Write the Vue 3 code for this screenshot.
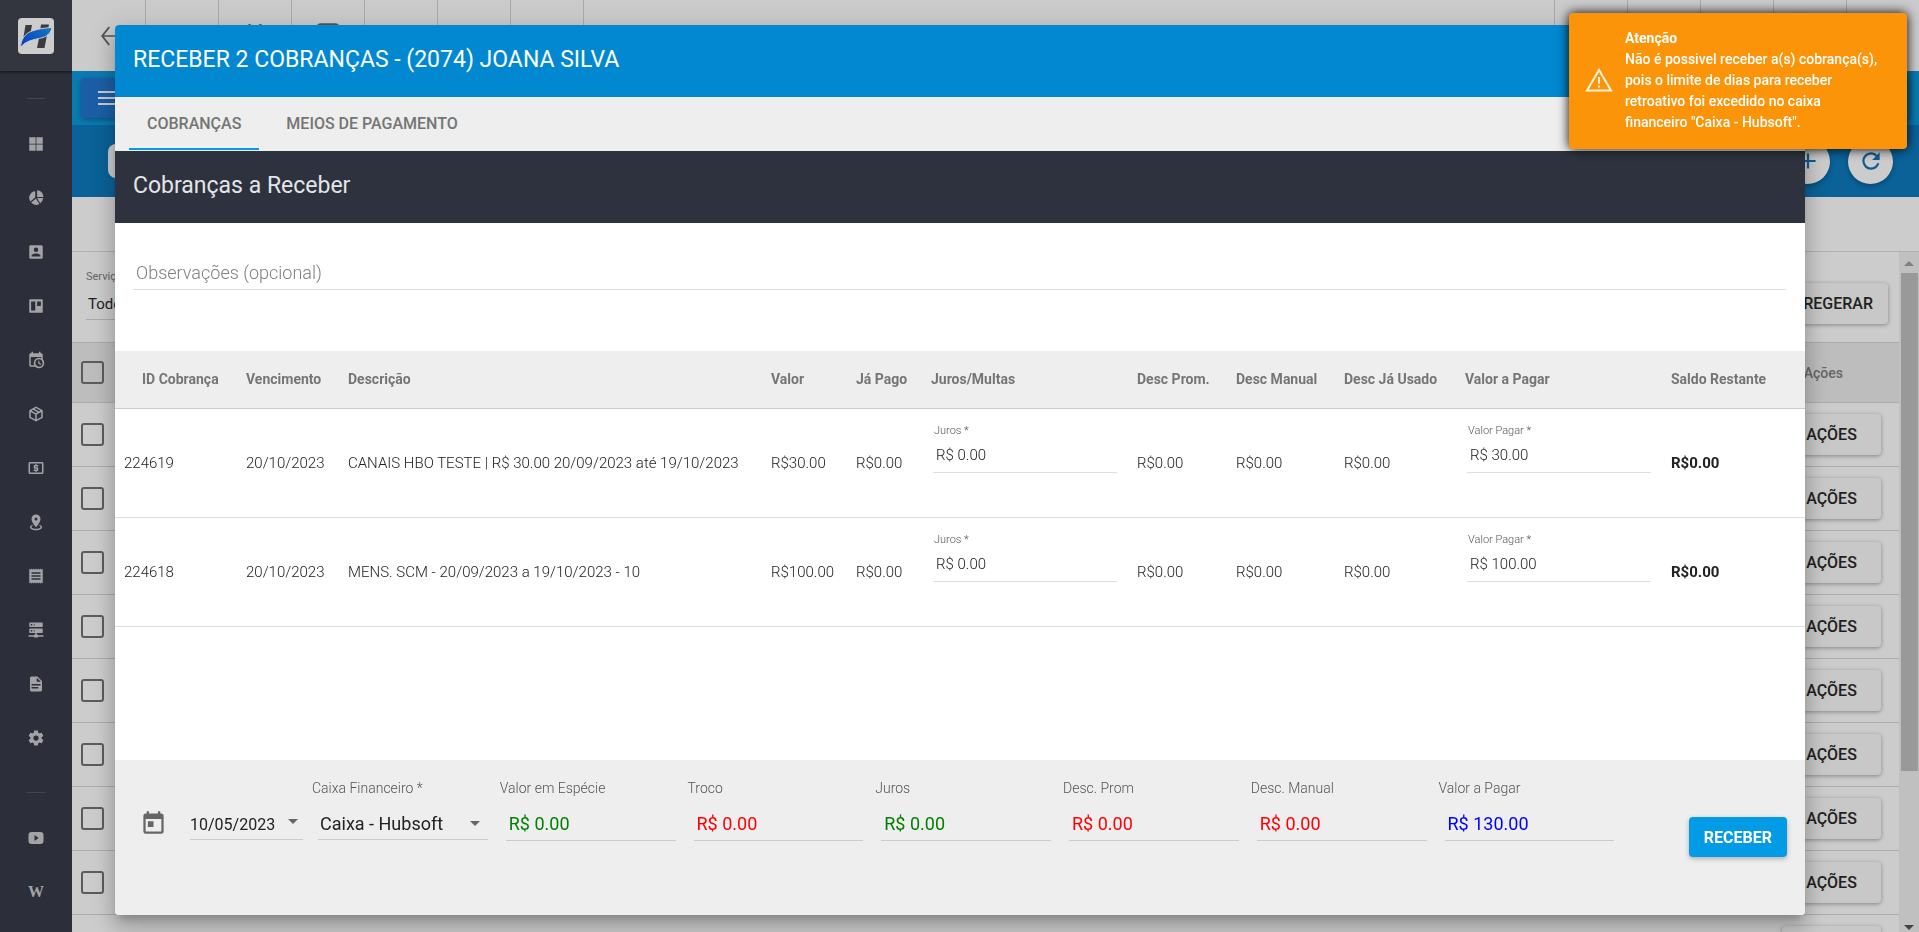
<script setup>
import { ref } from 'vue'

const mainIcons = [
  { name: 'Painel', d: 'M3 3h8.5v8.5H3zM12.5 3H21v8.5h-8.5zM3 12.5h8.5V21H3zM12.5 12.5H21V21h-8.5z' },
  { name: 'Gráficos', d: 'M13.5 1.5A9 9 0 0 1 22 10.5H13.5zM11 3v8L4.500 16.500A8.600 8.600 0 0 1 11 3zM12 12.500L16.500 20A9 9 0 0 1 5.500 18zM13.500 12H21.500A9 9 0 0 1 17.500 19z' },
  { name: 'Clientes', d: 'M6,17C6,15 10,13.9 12,13.9C14,13.9 18,15 18,17V18H6M15,9A3,3 0 0,1 12,12A3,3 0 0,1 9,9A3,3 0 0,1 12,6A3,3 0 0,1 15,9M3,5V19A2,2 0 0,0 5,21H19A2,2 0 0,0 21,19V5A2,2 0 0,0 19,3H5C3.89,3 3,3.9 3,5Z' },
  { name: 'Quadros', d: 'M4 3H20A1 1 0 0 1 21 4V20A1 1 0 0 1 20 21H4A1 1 0 0 1 3 20V4A1 1 0 0 1 4 3M5.5 6V18H11V6zM13.5 6V12H18.5V6z' },
  { name: 'Agenda', d: 'M15,13H16.5V15.82L18.94,17.23L18.19,18.53L15,16.69V13M19,8H5V19H9.67C9.24,18.09 9,17.07 9,16A7,7 0 0,1 16,9C17.07,9 18.09,9.24 19,9.67V8M5,21C3.89,21 3,20.1 3,19V5C3,3.89 3.89,3 5,3H6V1H8V3H16V1H18V3H19A2,2 0 0,1 21,5V11.1C22.24,12.36 23,14.09 23,16A7,7 0 0,1 16,23C14.09,23 12.36,22.24 11.1,21H5M16,11.15A4.85,4.85 0 0,0 11.15,16C11.15,18.68 13.32,20.85 16,20.85A4.85,4.85 0 0,0 20.85,16C20.85,13.32 18.68,11.15 16,11.15Z' },
  { name: 'Estoque', d: 'M21,16.5C21,16.88 20.79,17.21 20.47,17.38L12.57,21.82C12.41,21.94 12.21,22 12,22C11.79,22 11.59,21.94 11.43,21.82L3.53,17.38C3.21,17.21 3,16.88 3,16.5V7.5C3,7.12 3.21,6.79 3.53,6.62L11.43,2.18C11.59,2.06 11.79,2 12,2C12.21,2 12.41,2.06 12.57,2.18L20.47,6.62C20.79,6.79 21,7.12 21,7.5V16.5M12,4.15L10.11,5.22L16,8.61L17.96,7.5L12,4.15M6.04,7.5L12,10.85L13.96,9.75L8.08,6.35L6.04,7.5M5,15.91L11,19.29V12.58L5,9.21V15.91M19,15.91V9.21L13,12.58V19.29L19,15.91Z' },
  { name: 'Financeiro', d: 'M20,18H4V6H20M20,4H4C2.89,4 2,4.89 2,6V18A2,2 0 0,0 4,20H20A2,2 0 0,0 22,18V6C22,4.89 21.1,4 20,4M11,17H13V16H14A1,1 0 0,0 15,15V12A1,1 0 0,0 14,11H11V10H15V8H13V7H11V8H10A1,1 0 0,0 9,9V12A1,1 0 0,0 10,13H13V14H9V16H11V17Z' },
  { name: 'Mapa', d: 'M12,2C15.31,2 18,4.66 18,7.95C18,12.41 12,19 12,19C12,19 6,12.41 6,7.95C6,4.66 8.69,2 12,2M12,6A2,2 0 0,0 10,8A2,2 0 0,0 12,10A2,2 0 0,0 14,8A2,2 0 0,0 12,6M20,19C20,21.21 16.42,23 12,23C7.58,23 4,21.21 4,19C4,17.71 5.22,16.56 7.11,15.83L7.75,16.74C6.67,17.19 6,17.81 6,18.5C6,19.88 8.69,21 12,21C15.31,21 18,19.88 18,18.5C18,17.81 17.33,17.19 16.25,16.74L16.89,15.83C18.78,16.56 20,17.71 20,19Z' },
  { name: 'Notas', d: 'M18 17H6v-2h12v2zm0-4H6v-2h12v2zm0-4H6V7h12v2zM3 22l1.5-1.5L6 22l1.5-1.5L9 22l1.5-1.5L12 22l1.5-1.5L15 22l1.5-1.5L18 22l1.5-1.5L21 22V2l-1.5 1.5L18 2l-1.5 1.5L15 2l-1.5 1.5L12 2l-1.5 1.5L9 2 7.5 3.5 6 2 4.5 3.5 3 2v20z' },
  { name: 'Rede', d: 'M13,18H14A1,1 0 0,1 15,19H22V21H15A1,1 0 0,1 14,22H10A1,1 0 0,1 9,21H2V19H9A1,1 0 0,1 10,18H11V16H4A1,1 0 0,1 3,15V11A1,1 0 0,1 4,10H20A1,1 0 0,1 21,11V15A1,1 0 0,1 20,16H13V18M4,2H20A1,1 0 0,1 21,3V7A1,1 0 0,1 20,8H4A1,1 0 0,1 3,7V3A1,1 0 0,1 4,2M9,6H10V4H9V6M9,14H10V12H9V14M5,4V6H7V4H5M5,12V14H7V12H5Z' },
  { name: 'Relatórios', d: 'M13,9H18.5L13,3.5V9M6,2H14L20,8V20A2,2 0 0,1 18,22H6C4.89,22 4,21.1 4,20V4C4,2.89 4.89,2 6,2M15,18V16H6V18H15M18,14V12H6V14H18Z' },
  { name: 'Configurações', d: 'M12,15.5A3.5,3.5 0 0,1 8.5,12A3.5,3.5 0 0,1 12,8.5A3.5,3.5 0 0,1 15.5,12A3.5,3.5 0 0,1 12,15.5M19.43,12.97C19.47,12.65 19.5,12.33 19.5,12C19.5,11.67 19.47,11.34 19.43,11L21.54,9.37C21.73,9.22 21.78,8.95 21.66,8.73L19.66,5.27C19.54,5.05 19.27,4.96 19.05,5.05L16.56,6.05C16.04,5.66 15.5,5.32 14.87,5.07L14.5,2.42C14.46,2.18 14.25,2 14,2H10C9.75,2 9.54,2.18 9.5,2.42L9.13,5.07C8.5,5.32 7.96,5.66 7.44,6.05L4.95,5.05C4.73,4.96 4.46,5.05 4.34,5.27L2.34,8.73C2.21,8.95 2.27,9.22 2.46,9.37L4.57,11C4.53,11.34 4.5,11.67 4.5,12C4.5,12.33 4.53,12.65 4.57,12.97L2.46,14.63C2.27,14.78 2.21,15.05 2.34,15.27L4.34,18.73C4.46,18.95 4.73,19.03 4.95,18.95L7.44,17.94C7.96,18.34 8.5,18.68 9.13,18.93L9.5,21.58C9.54,21.82 9.75,22 10,22H14C14.25,22 14.46,21.82 14.5,21.58L14.87,18.93C15.5,18.67 16.04,18.34 16.56,17.94L19.05,18.95C19.27,19.03 19.54,18.95 19.66,18.73L21.66,15.27C21.78,15.05 21.73,14.78 21.54,14.63L19.43,12.97Z' },
]

const charges = ref([
  { id: '224619', due: '20/10/2023', text: 'CANAIS HBO TESTE | R$ 30.00 20/09/2023 até 19/10/2023', value: 'R$30.00', interest: 'R$ 0.00', pay: 'R$ 30.00' },
  { id: '224618', due: '20/10/2023', text: 'MENS. SCM - 20/09/2023 a 19/10/2023 - 10', value: 'R$100.00', interest: 'R$ 0.00', pay: 'R$ 100.00' },
])

const totals = ref([
  { id: 'especie', label: 'Valor em Espécie', value: 'R$ 0.00', tone: 'green' },
  { id: 'troco', label: 'Troco', value: 'R$ 0.00', tone: 'red' },
  { id: 'juros', label: 'Juros', value: 'R$ 0.00', tone: 'green' },
  { id: 'prom', label: 'Desc. Prom', value: 'R$ 0.00', tone: 'red' },
  { id: 'manual', label: 'Desc. Manual', value: 'R$ 0.00', tone: 'red' },
  { id: 'pagar', label: 'Valor a Pagar', value: 'R$ 130.00', tone: 'blue' },
])

const actions = [...Array(8).fill('AÇÕES'), '']
const note = ref('')
const date = ref('10/05/2023')
const account = ref('Caixa - Hubsoft')
</script>

<template>
  <div class="app">
    <nav class="sidebar" aria-label="Menu principal">
      <a href="#" class="brand" aria-label="Início">
        <svg viewBox="0 0 36 36" width="36" height="36">
          <defs>
            <linearGradient id="swoosh" x1="0" y1="1" x2="1" y2="0">
              <stop offset="0" stop-color="#0a35c4" />
              <stop offset="1" stop-color="#127cc0" />
            </linearGradient>
          </defs>
          <rect width="36" height="36" rx="4" fill="#cdcdcd" />
          <path d="M7.500 7H14L12.500 15L5 22zM23 6.500H31L26.500 30H19L21 20H16L18 14H22z" fill="#3b3b3d" />
          <path d="M2.500 29.500C3 21 7 15.500 14 13C21 10.500 27 10 34 9.500C33 14 30 18 25 19.500C15 22 8 22.500 2.500 29.500z" fill="url(#swoosh)" stroke="#cdcdcd" stroke-width="1" />
        </svg>
      </a>
      <span class="rule"></span>
      <a v-for="icon in mainIcons" :key="icon.name" href="#" class="item" :aria-label="icon.name">
        <svg viewBox="0 0 24 24" width="18" height="18"><path :d="icon.d" fill-rule="evenodd" /></svg>
      </a>
      <span class="rule"></span>
      <a href="#" class="item" aria-label="Vídeos">
        <svg viewBox="0 0 24 24" width="18" height="18"><path fill-rule="evenodd" d="M6 4H18Q22 4 22 8V16Q22 20 18 20H6Q2 20 2 16V8Q2 4 6 4M10 8V16L15.500 12z" /></svg>
      </a>
      <a href="#" class="item wiki" aria-label="Wiki">W</a>
    </nav>

    <main class="page">
      <header class="topbar">
        <button class="cell" aria-label="Voltar">
          <svg viewBox="0 0 24 24" width="24" height="24"><path d="M23 11.200H5L11 3.500L9.500 2.500L2 12L9.500 21.500L11 20.500L5 12.800H23z" /></svg>
        </button>
        <span class="cell"></span>
        <button class="cell" aria-label="Calendário">
          <svg viewBox="0 0 24 24" width="26" height="26"><path d="M7 1v3M17 1v3M4 4H20V21H4z" fill="none" stroke="#555" stroke-width="2" /></svg>
        </button>
        <button class="cell" aria-label="Mensagens">
          <svg viewBox="0 0 24 24" width="28" height="28"><rect x="2" y="1" width="20" height="20" rx="4" /></svg>
        </button>
        <span class="cell"></span><span class="cell"></span><span class="cell"></span>
        <span class="grow"></span>
        <span class="cell"></span><span class="cell"></span><span class="cell"></span><span class="cell"></span><span class="cell end"></span>
      </header>
      <div class="actionbar">
        <button class="menu" aria-label="Menu"><span></span><span></span><span></span></button>
        <button class="menu short" aria-label="Mais"></button>
      </div>
      <div class="searchbar">
        <input class="search" type="text" aria-label="Buscar">
        <button class="round" aria-label="Adicionar">
          <svg viewBox="0 0 24 24" width="26" height="26"><path d="M19,13H13V19H11V13H5V11H11V5H13V11H19V13Z" /></svg>
        </button>
        <button class="round" aria-label="Atualizar">
          <svg viewBox="0 0 24 24" width="26" height="26"><path d="M17.65,6.35C16.2,4.9 14.21,4 12,4A8,8 0 0,0 4,12A8,8 0 0,0 12,20C15.73,20 18.84,17.45 19.73,14H17.65C16.83,16.33 14.61,18 12,18A6,6 0 0,1 6,12A6,6 0 0,1 12,6C13.66,6 15.14,6.69 16.22,7.78L13,11H20V4L17.65,6.35Z" /></svg>
        </button>
      </div>
      <div class="spacer"></div>
      <div class="scroller">
        <div class="content">
          <div class="filters">
            <div class="service">
              <label for="servico">Serviço</label>
              <select id="servico"><option>Todos</option></select>
            </div>
            <button class="raised">REGERAR</button>
          </div>
          <table class="list">
            <thead>
              <tr>
                <th><input type="checkbox" aria-label="Selecionar todos"></th>
                <th class="right">Ações</th>
              </tr>
            </thead>
            <tbody>
              <tr v-for="(action, n) in actions" :key="n">
                <td><input type="checkbox" :aria-label="'Selecionar linha ' + (n + 1)"></td>
                <td class="right"><button class="raised" aria-label="Ações">{{ action }}</button></td>
              </tr>
            </tbody>
          </table>
        </div>
        <div class="track">
          <span class="arrow up"></span>
          <span class="thumb"></span>
          <span class="arrow down"></span>
        </div>
      </div>
    </main>

    <div class="overlay">
      <section class="dialog" role="dialog" aria-label="Receber cobranças">
        <h1 class="title">RECEBER 2 COBRANÇAS - (2074) JOANA SILVA</h1>
        <div class="tabs" role="tablist">
          <button role="tab" class="tab active">COBRANÇAS</button>
          <button role="tab" class="tab">MEIOS DE PAGAMENTO</button>
        </div>
        <h2 class="subtitle">Cobranças a Receber</h2>
        <div class="body">
          <input v-model="note" class="note" type="text" placeholder="Observações (opcional)" aria-label="Observações (opcional)">
          <table class="charges">
            <colgroup>
              <col class="c-id"><col class="c-due"><col><col class="c-value"><col class="c-paid"><col class="c-field">
              <col class="c-prom"><col class="c-manual"><col class="c-used"><col class="c-field"><col class="c-rest">
            </colgroup>
            <thead>
              <tr>
                <th>ID Cobrança</th><th>Vencimento</th><th>Descrição</th><th>Valor</th><th>Já Pago</th><th>Juros/Multas</th>
                <th>Desc Prom.</th><th>Desc Manual</th><th>Desc Já Usado</th><th>Valor a Pagar</th><th>Saldo Restante</th>
              </tr>
            </thead>
            <tbody>
              <tr v-for="c in charges" :key="c.id">
                <td>{{ c.id }}</td>
                <td>{{ c.due }}</td>
                <td>{{ c.text }}</td>
                <td>{{ c.value }}</td>
                <td>R$0.00</td>
                <td>
                  <div class="field">
                    <label :for="'j' + c.id">Juros *</label>
                    <input :id="'j' + c.id" v-model="c.interest" type="text">
                  </div>
                </td>
                <td>R$0.00</td>
                <td>R$0.00</td>
                <td>R$0.00</td>
                <td>
                  <div class="field">
                    <label :for="'p' + c.id">Valor Pagar *</label>
                    <input :id="'p' + c.id" v-model="c.pay" type="text">
                  </div>
                </td>
                <td><strong>R$0.00</strong></td>
              </tr>
            </tbody>
          </table>
        </div>
        <footer class="summary">
          <div class="date">
            <svg viewBox="0 0 24 24" width="27" height="27"><path d="M7,10H12V15H7M19,19H5V8H19M19,3H18V1H16V3H8V1H6V3H5C3.89,3 3,3.9 3,5V19A2,2 0 0,0 5,21H19A2,2 0 0,0 21,19V5A2,2 0 0,0 19,3Z" fill-rule="evenodd" /></svg>
            <div class="dateline">
              <input v-model="date" type="text" aria-label="Data">
              <button aria-label="Abrir calendário"><span class="caret"></span></button>
            </div>
          </div>
          <div class="total">
            <label for="caixa">Caixa Financeiro *</label>
            <div class="pick">
              <select id="caixa" v-model="account"><option>Caixa - Hubsoft</option></select>
              <span class="caret"></span>
            </div>
          </div>
          <div v-for="t in totals" :key="t.id" class="total">
            <label :for="t.id">{{ t.label }}</label>
            <input :id="t.id" v-model="t.value" type="text" :class="t.tone">
          </div>
          <button class="receive">RECEBER</button>
        </footer>
      </section>
    </div>

    <div class="toast" role="alert">
      <svg viewBox="0 0 28 24" width="28" height="24"><path d="M14 2L26 22.500H2z" fill="none" stroke="#fff3e0" stroke-width="2" /><path d="M13 9h2v7h-2zM13 17.500h2v2h-2z" fill="#fff3e0" /></svg>
      <div>
        <strong>Atenção</strong>
        <p>Não é possivel receber a(s) cobrança(s), pois o limite de dias para receber retroativo foi excedido no caixa financeiro "Caixa - Hubsoft".</p>
      </div>
    </div>
  </div>
</template>

<style>
body { margin: 0; }
</style>

<style scoped>
* { box-sizing: border-box; }
.app { display: flex; height: 100vh; overflow: hidden; background: #ccc; font-family: Roboto, "Liberation Sans", sans-serif; font-size: 15px; color: #212121; }
button, input, select { font: inherit; color: inherit; border: 0; background: none; padding: 0; margin: 0; border-radius: 0; outline: 0; }
select { appearance: none; }

.sidebar { width: 72px; flex: none; background: #2c2e3a; display: flex; flex-direction: column; align-items: center; overflow: hidden; }
.brand { width: 100%; height: 71px; flex: none; display: flex; align-items: center; justify-content: center; background: #33363e; box-shadow: 0 1px 3px rgba(0, 0, 0, .6); }
.rule { width: 18px; height: 1px; flex: none; background: #44464f; margin: 27px 0 18px; }
.item { height: 54px; flex: none; display: flex; align-items: center; justify-content: center; fill: #a3a3a6; color: #a3a3a6; text-decoration: none; }
.wiki { font-family: "Liberation Serif", serif; font-size: 16px; font-weight: 700; }

.page { flex: 1; min-width: 0; display: flex; flex-direction: column; }
.topbar { height: 71px; flex: none; display: flex; background: #cbcbcb; }
.cell { width: 73px; flex: none; border-right: 1px solid #aaa; display: flex; align-items: center; justify-content: center; fill: #555; }
.cell.end { width: 72px; border-right: 0; }
.grow { flex: 1; border-right: 1px solid #aaa; }
.cell:first-child { width: 74px; padding-left: 4px; }
.actionbar { height: 54px; flex: none; background: #0b7ab0; display: flex; justify-content: space-between; align-items: center; padding: 0 9px; }
.menu { width: 74px; height: 40px; border-radius: 4px; background: #1c5ea6; box-shadow: 0 2px 5px rgba(0, 0, 0, .3); padding-left: 17px; display: flex; flex-direction: column; justify-content: center; gap: 4px; }
.menu span { width: 24px; height: 2px; background: #ccc; }
.menu.short { background: #0b6da3; }
.searchbar { height: 72px; flex: none; background: #0a6299; display: flex; align-items: center; gap: 18px; padding: 0 26px 0 36px; }
.search { width: 480px; height: 34px; margin-right: auto; border-radius: 8px; background: #ccc; }
.round { width: 45px; height: 45px; border-radius: 50%; background: #ccc; fill: #0d5c95; display: flex; align-items: center; justify-content: center; box-shadow: 0 2px 5px rgba(0, 0, 0, .3); }
.spacer { height: 55px; flex: none; border-bottom: 1px solid #b0b0b0; }
.scroller { flex: 1; min-height: 0; display: flex; }
.content { flex: 1; min-width: 0; overflow: hidden; }
.filters { height: 90px; display: flex; justify-content: space-between; align-items: flex-end; padding: 0 11px 18px 14px; }
.service { display: flex; flex-direction: column; width: 160px; padding-bottom: 4px; }
.service label { font-size: 11px; line-height: 14px; color: #666; }
.service select { height: 36px; padding: 4px 0 0 2px; border-bottom: 1px solid #aaa; }
.raised { height: 41px; border-radius: 4px; background: #c8c8c8; font-size: 16px; font-weight: 500; padding: 0 15px 0 24px; box-shadow: 0 1px 4px rgba(0, 0, 0, .35); }
.list { width: 100%; border-collapse: collapse; }
.list tr { height: 64px; border-bottom: 1px solid #acacac; }
.list thead tr { height: 60px; background: #bdbdbd; border-top: 1px solid #acacac; }
.list th, .list td { padding: 0 0 0 9px; text-align: left; vertical-align: middle; }
.list .right { text-align: right; padding: 0 18px 0 0; }
.list th.right { font-size: 14px; font-weight: 500; color: #666; padding-right: 56px; }
.list .raised { min-width: 99px; padding: 0 24px; vertical-align: middle; }
.list input { appearance: none; display: block; width: 23px; height: 23px; border: 2px solid #5c5c5c; border-radius: 3px; }
.track { width: 20px; flex: none; background: #c0c0c0; display: flex; flex-direction: column; align-items: center; padding: 9px 0 2px; }
.thumb { width: 17px; height: 498px; margin: 7px 0 auto; background: #999; }
.arrow { border: 5px solid transparent; border-top-width: 0; border-bottom: 5px solid #808080; }
.arrow.down { border-bottom-width: 0; border-top: 5px solid #444; }

.overlay { position: fixed; inset: 0; padding: 25px 114px 17px 115px; display: flex; }
.dialog { flex: 1; min-width: 0; display: flex; flex-direction: column; background: #fff; border-radius: 4px; overflow: hidden; box-shadow: 0 7px 8px -4px rgba(0, 0, 0, .2), 0 13px 19px 2px rgba(0, 0, 0, .14), 0 5px 24px 4px rgba(0, 0, 0, .12); }
.title, .subtitle { margin: 0; height: 72px; flex: none; padding: 0 18px; font-size: 23px; line-height: 70px; font-weight: 400; color: #fff; background: #0288d1; }
.subtitle { background: #2d323e; color: #e4e5e7; }
.tabs { height: 54px; flex: none; display: flex; align-items: flex-start; gap: 9px; padding-left: 14px; background: #eee; }
.tab { height: 53px; padding: 2px 18px 0; font-size: 16px; font-weight: 500; color: #757575; border-bottom: 2px solid transparent; }
.tab.active { border-color: #039be5; }
.body { flex: 1; min-height: 0; }
.note { display: block; width: calc(100% - 37px); height: 37px; margin: 30px 18px 61px; padding: 2px 3px 0; border-bottom: 1px solid #dedede; font-size: 18px; font-weight: 300; }
.note::placeholder { color: #808080; opacity: 1; }
.charges { width: 100%; table-layout: fixed; border-collapse: collapse; font-weight: 300; }
.charges th { height: 57px; padding: 0; background: #eee; text-align: left; font-size: 14px; font-weight: 700; color: #757575; white-space: nowrap; }
.charges td { height: 109px; padding: 0; white-space: nowrap; }
.charges tr { border-bottom: 1px solid #dedede; }
.charges thead tr { border-bottom: 1px solid #ccc; }
.charges th:first-child { padding-left: 27px; }
.charges td:first-child { padding-left: 9px; }
.c-id { width: 131px; } .c-due { width: 102px; } .c-value { width: 85px; } .c-paid { width: 75px; } .c-field { width: 206px; }
.c-prom { width: 99px; } .c-manual { width: 108px; } .c-used { width: 121px; } .c-rest { width: 134px; }
.field { display: flex; flex-direction: column; margin: 0 20px 28px 2px; }
.field label { font-size: 11px; line-height: 14px; padding-left: 1px; color: #555; }
.field input { width: 100%; height: 35px; padding: 0 3px; border-bottom: 1px solid #dedede; }
.charges strong { font-weight: 700; }

.summary { height: 155px; flex: none; display: flex; align-items: flex-start; background: #eee; padding: 19px 18px 0 25px; }
.date { display: flex; align-items: center; padding-top: 24px; width: 172px; }
.date svg { fill: #666; flex: none; margin-top: 4px; }
.dateline { display: flex; flex: 1; min-width: 0; height: 37px; margin: 0 9px 0 23px; border-bottom: 1px solid #ccc; }
.dateline input { flex: 1; min-width: 0; font-size: 16px; padding-top: 6px; }
.dateline button { width: 15px; display: flex; align-items: center; justify-content: flex-start; }
.caret { border: 5px solid transparent; border-bottom: 0; border-top: 5px solid #666; }
.total { width: 11.4%; flex: none; display: flex; flex-direction: column; }
.total label { font-size: 14px; line-height: 18px; font-weight: 300; color: #555; }
.total input { height: 44px; margin: 0 12px 0 6px; padding: 10px 3px 0; border-bottom: 1px solid #ccc; font-size: 18px; }
.pick { display: flex; align-items: center; height: 43px; margin: 0 12px 0 6px; border-bottom: 1px solid #ccc; padding: 10px 8px 0 2px; }
.pick select { flex: 1; min-width: 0; font-size: 18px; }
.green { color: #008000; } .red { color: #f00; } .blue { color: #00f; }
.receive { margin: 38px 0 0 auto; height: 40px; padding: 0 15px; border-radius: 4px; background: #039be5; color: #fff; font-size: 16px; font-weight: 700; box-shadow: 0 2px 5px rgba(0, 0, 0, .26); }

.toast { position: fixed; top: 13px; right: 12px; width: 338px; min-height: 136px; padding: 14px 24px 16px 16px; display: flex; align-items: center; gap: 12px; border-radius: 4px; background: #fb9409; color: #fff; box-shadow: 0 0 12px #000; font-size: 14px; line-height: 21px; font-weight: 500; }
.toast svg { flex: none; }
.toast strong { font-weight: 700; }
.toast p { margin: 0; }
</style>
